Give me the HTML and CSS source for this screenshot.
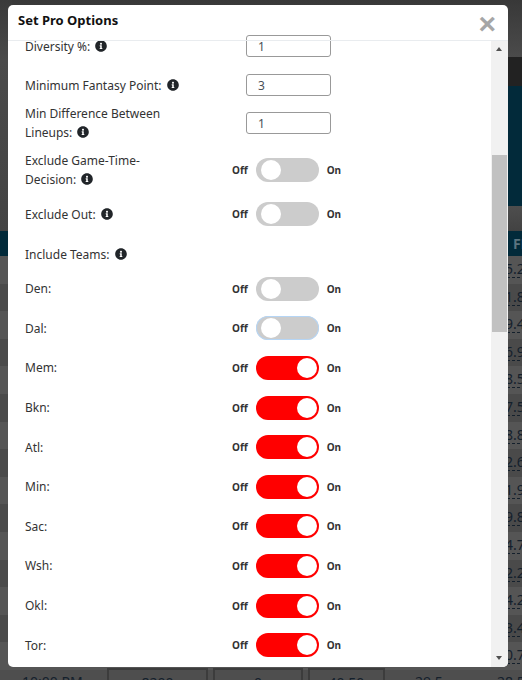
FILE: index.html
```html
<!DOCTYPE html>
<html>
<head>
    <title>Set Pro Options</title>
    <link rel="stylesheet" href="styles.css">
</head>
<body>
    <svg class="defs" width="0" height="0">
        <symbol id="info" viewBox="0 0 512 512">
            <path d="M256 8C119 8 8 119 8 256s111 248 248 248 248-111 248-248S393 8 256 8zm0 110c23 0 42 19 42 42s-19 42-42 42-42-19-42-42 19-42 42-42zm56 254c0 7-5 12-12 12h-88c-7 0-12-5-12-12v-24c0-7 5-12 12-12h12v-64h-12c-7 0-12-5-12-12v-24c0-7 5-12 12-12h64c7 0 12 5 12 12v100h12c7 0 12 5 12 12v24z"/>
        </symbol>
    </svg>

    <div class="page">
        <div class="band band-top"></div>
        <div class="band band-dark"></div>
        <div class="band band-teal"></div>
        <div class="band band-grey"></div>
        <div class="table-head"><span class="last-cell">FP</span></div>
        <div class="table-row"><span class="last-cell link">45.2</span></div>
        <div class="table-row alt"><span class="last-cell link">31.8</span></div>
        <div class="table-row"><span class="last-cell link">29.4</span></div>
        <div class="table-row alt"><span class="last-cell link">36.9</span></div>
        <div class="table-row"><span class="last-cell link">38.5</span></div>
        <div class="table-row alt"><span class="last-cell link">27.5</span></div>
        <div class="table-row"><span class="last-cell link">28.8</span></div>
        <div class="table-row alt"><span class="last-cell link">22.6</span></div>
        <div class="table-row"><span class="last-cell link">31.9</span></div>
        <div class="table-row alt"><span class="last-cell link">29.8</span></div>
        <div class="table-row"><span class="last-cell link">24.7</span></div>
        <div class="table-row alt"><span class="last-cell link">32.2</span></div>
        <div class="table-row"><span class="last-cell link">34.2</span></div>
        <div class="table-row alt"><span class="last-cell link">23.4</span></div>
        <div class="table-row"><span class="last-cell link">30.7</span></div>
        <div class="table-row last-row">
            <span class="cell cell-time">10:00 PM</span>
            <span class="cell cell-box box-salary">8200</span>
            <span class="cell cell-box box-zero">0</span>
            <span class="cell cell-box box-price">40.50</span>
            <span class="cell cell-a">29.5</span>
            <span class="cell cell-b">28.5</span>
        </div>
    </div>

    <div class="modal">
        <div class="modal-header">
            <h5 class="modal-title">Set Pro Options</h5>
            <span class="close">&times;</span>
        </div>
        <div class="modal-body">
            <div class="options">
                <div class="row row-first">
                    <div class="label">Diversity %: <svg class="info"><use href="#info"/></svg></div>
                    <input class="num" type="text" value="1">
                </div>
                <div class="row">
                    <div class="label">Minimum Fantasy Point: <svg class="info"><use href="#info"/></svg></div>
                    <input class="num" type="text" value="3">
                </div>
                <div class="row">
                    <div class="label">Min Difference Between Lineups: <svg class="info"><use href="#info"/></svg></div>
                    <input class="num" type="text" value="1">
                </div>
                <div class="row row-gtd">
                    <div class="label">Exclude Game-Time-Decision: <svg class="info"><use href="#info"/></svg></div>
                    <div class="switch-wrap"><span>Off</span><span class="switch"></span><span>On</span></div>
                </div>
                <div class="row row-out">
                    <div class="label">Exclude Out: <svg class="info"><use href="#info"/></svg></div>
                    <div class="switch-wrap"><span>Off</span><span class="switch"></span><span>On</span></div>
                </div>
                <div class="row row-include">
                    <div class="label">Include Teams: <svg class="info"><use href="#info"/></svg></div>
                </div>
                <div class="row row-team">
                    <div class="label">Den:</div>
                    <div class="switch-wrap"><span>Off</span><span class="switch"></span><span>On</span></div>
                </div>
                <div class="row row-team">
                    <div class="label">Dal:</div>
                    <div class="switch-wrap"><span>Off</span><span class="switch focus"></span><span>On</span></div>
                </div>
                <div class="row row-team">
                    <div class="label">Mem:</div>
                    <div class="switch-wrap"><span>Off</span><span class="switch on"></span><span>On</span></div>
                </div>
                <div class="row row-team">
                    <div class="label">Bkn:</div>
                    <div class="switch-wrap"><span>Off</span><span class="switch on"></span><span>On</span></div>
                </div>
                <div class="row row-team">
                    <div class="label">Atl:</div>
                    <div class="switch-wrap"><span>Off</span><span class="switch on"></span><span>On</span></div>
                </div>
                <div class="row row-team">
                    <div class="label">Min:</div>
                    <div class="switch-wrap"><span>Off</span><span class="switch on"></span><span>On</span></div>
                </div>
                <div class="row row-team">
                    <div class="label">Sac:</div>
                    <div class="switch-wrap"><span>Off</span><span class="switch on"></span><span>On</span></div>
                </div>
                <div class="row row-team">
                    <div class="label">Wsh:</div>
                    <div class="switch-wrap"><span>Off</span><span class="switch on"></span><span>On</span></div>
                </div>
                <div class="row row-team">
                    <div class="label">Okl:</div>
                    <div class="switch-wrap"><span>Off</span><span class="switch on"></span><span>On</span></div>
                </div>
                <div class="row row-team">
                    <div class="label">Tor:</div>
                    <div class="switch-wrap"><span>Off</span><span class="switch on"></span><span>On</span></div>
                </div>
            </div>
            <div class="scrollbar">
                <div class="arrow arrow-up"></div>
                <div class="thumb"></div>
                <div class="arrow arrow-down"></div>
            </div>
        </div>
    </div>
</body>
</html>
```

FILE: styles.css
```css
html, body {
    margin: 0;
    padding: 0;
    height: 680px;
    overflow: hidden;
}

body {
    font-family: "Noto Sans", sans-serif;
    color: #333;
    background-color: #4a4a4a;
}

.defs {
    display: block;
    height: 0;
}

/* dimmed page behind the modal */
.page {
    height: 680px;
    overflow: hidden;
    color: #14202c;
    font-size: 14px;
    background: linear-gradient(#3a3a3a, #4a4a4a 60px, #434343 231px);
}

.band {
    margin-left: 12px;
}

.band-top {
    height: 57px;
    background: linear-gradient(#383838, #4b4b4b);
}

.band-dark {
    height: 29px;
    background-color: #222;
}

.band-teal {
    height: 120px;
    background-color: #022a3a;
}

.band-grey {
    height: 25px;
    background: linear-gradient(#4e4e4e, #424242);
}

.table-head {
    height: 25px;
    background-color: #022a3a;
    color: #5c7480;
    font-weight: bold;
    line-height: 25px;
    position: relative;
}

.table-row {
    height: 27.6px;
    background-color: #555;
    position: relative;
    line-height: 26px;
}

.table-row.alt {
    background-color: #4a4a4a;
}

.last-cell {
    position: absolute;
    left: 513px;
}

.table-row .last-cell {
    left: 497px;
}

.link {
    border-bottom: 1px dashed #14202c;
    line-height: 17px;
    top: 4px;
}

.last-row {
    display: flex;
    height: 30px;
    line-height: 20px;
    background-color: #4e4e4e;
}

.cell {
    position: absolute;
    top: 2px;
}

.cell-box {
    top: -2px;
    height: 30px;
    padding-top: 3px;
    border: 2px solid #3c3c3c;
    box-sizing: border-box;
    text-align: center;
}

.cell-time { left: 22px; }
.box-salary { left: 107px; width: 101px; }
.box-zero { left: 213px; width: 90px; }
.box-price { left: 308px; width: 77px; }
.cell-a { left: 415px; }
.cell-b { left: 497px; }

/* modal */
.modal {
    position: absolute;
    left: 8px;
    top: 5px;
    width: 500px;
    height: 662px;
    background-color: #fff;
    border-radius: 5px;
    overflow: hidden;
    display: flex;
    flex-direction: column;
}

.modal-header {
    height: 35px;
    flex: none;
    display: flex;
    justify-content: space-between;
    border-bottom: 1px solid #e9ecef;
    position: relative;
}

.modal-title {
    margin: 0;
    padding: 6px 0 0 10px;
    font-size: 13px;
    font-weight: bold;
    color: #111;
}

.close {
    position: absolute;
    right: 12px;
    top: 2px;
    font-family: "Liberation Sans", sans-serif;
    font-size: 30px;
    font-weight: bold;
    line-height: 34px;
    color: #a6a6a6;
}

.modal-body {
    flex: 1;
    display: flex;
    min-height: 0;
}

.options {
    flex: 1;
    margin-top: -14px;
    padding-left: 17px;
    font-size: 12px;
}

.row {
    height: 38px;
    display: flex;
    align-items: center;
}

.row-first { height: 38px; padding-bottom: 1px; }
.row-gtd { height: 56px; }
.row-out { height: 32px; }
.row-include { height: 30px; padding-top: 9px; }
.row-team { height: 39.6px; }

.label {
    width: 207px;
    flex: none;
    padding-right: 45px;
    box-sizing: border-box;
    line-height: 19px;
}

.info {
    width: 12px;
    height: 12px;
    margin-left: 2px;
    vertical-align: -1px;
    fill: #212529;
}

.num {
    width: 85px;
    height: 22px;
    margin-left: 14px;
    padding: 0 11px;
    box-sizing: border-box;
    border: 1px solid #999;
    border-radius: 3px;
    font-family: inherit;
    font-size: 12px;
    color: #495057;
}

.switch-wrap {
    display: flex;
    align-items: center;
    gap: 8px;
    font-size: 10px;
    font-weight: bold;
}

.switch {
    width: 63px;
    height: 24px;
    border-radius: 12px;
    background-color: #ccc;
    position: relative;
}

.switch::after {
    content: "";
    position: absolute;
    left: 5px;
    top: 2px;
    width: 20px;
    height: 20px;
    border-radius: 50%;
    background-color: #fff;
}

.switch.on {
    background-color: #f00;
}

.switch.on::after {
    left: 41px;
}

.switch.focus {
    box-shadow: inset 0 0 0 1px #b5d5f5;
}

.scrollbar {
    width: 17px;
    flex: none;
    display: flex;
    flex-direction: column;
    background-color: #f1f1f1;
}

.arrow {
    height: 17px;
    flex: none;
    position: relative;
}

.arrow::after {
    content: "";
    position: absolute;
    left: 5px;
    top: 6px;
    border-left: 3.5px solid transparent;
    border-right: 3.5px solid transparent;
}

.arrow-up::after {
    border-bottom: 4px solid #505050;
}

.arrow-down {
    margin-top: auto;
}

.arrow-down::after {
    border-top: 4px solid #505050;
}

.thumb {
    height: 177px;
    margin: 97px 1px 0;
    background-color: #c1c1c1;
}
```
